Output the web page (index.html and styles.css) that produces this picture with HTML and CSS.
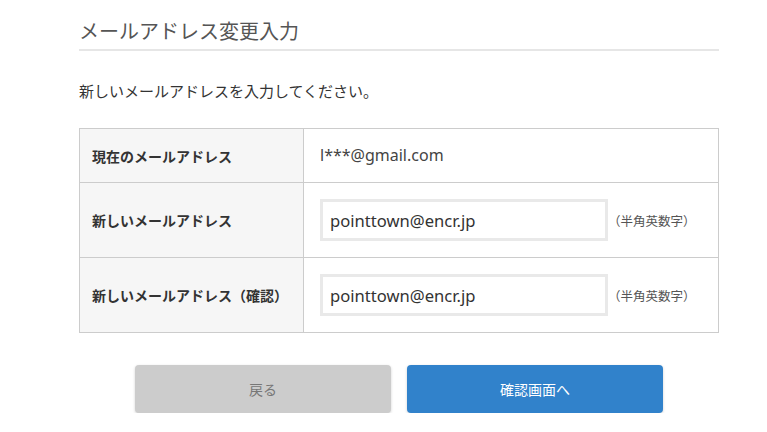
FILE: index.html
```html
<!DOCTYPE html>
<html lang="ja">
<head>
<meta charset="utf-8">
<link rel="stylesheet" href="styles.css">
</head>
<body>
<main class="page">
  <h1 class="title">メールアドレス変更入力</h1>
  <p class="lead">新しいメールアドレスを入力してください。</p>
  <div class="form-table">
    <div class="cell label">現在のメールアドレス</div>
    <div class="cell value current">l***@gmail.com</div>
    <div class="cell label">新しいメールアドレス</div>
    <div class="cell value">
      <input class="field" type="text" value="pointtown@encr.jp">
      <span class="note">（半角英数字）</span>
    </div>
    <div class="cell label">新しいメールアドレス（確認）</div>
    <div class="cell value">
      <input class="field" type="text" value="pointtown@encr.jp">
      <span class="note">（半角英数字）</span>
    </div>
  </div>
  <div class="actions">
    <button class="btn btn-back" type="button">戻る</button>
    <button class="btn btn-next" type="button">確認画面へ</button>
  </div>
</main>
</body>
</html>
```
FILE: styles.css
```css
* { box-sizing: border-box; }
html, body { margin: 0; padding: 0; background: #fff; }
body {
  font-family: "Noto Sans", "Noto Sans CJK JP", sans-serif;
  color: #333;
}
.page {
  width: 640px;
  margin-left: 79px;
}
.title {
  margin: 0;
  padding-top: 18px;
  padding-bottom: 3px;
  font-size: 20px;
  line-height: 28px;
  font-weight: normal;
  color: #555;
  border-bottom: 2px solid #e6e6e6;
}
.lead {
  margin: 30px 0 0;
  font-size: 15px;
  line-height: 20px;
  color: #333;
}
.form-table {
  margin-top: 27px;
  display: grid;
  grid-template-columns: 224px 415px;
  grid-template-rows: 54px 75px 75px;
  border-left: 1px solid #ccc;
  border-top: 1px solid #ccc;
}
.cell {
  border-right: 1px solid #ccc;
  border-bottom: 1px solid #ccc;
  display: flex;
  align-items: center;
}
.label {
  background: #f6f6f6;
  padding-left: 12px;
  font-size: 14px;
  font-weight: bold;
  color: #333;
}
.value { padding-left: 16px; }
.current { font-size: 16px; color: #444; padding-bottom: 2px; }
.field {
  width: 288px;
  height: 42px;
  margin: 0;
  border: 3px solid #e9e9e9;
  padding: 0 7px;
  font-family: "Noto Sans", "Noto Sans CJK JP", sans-serif;
  font-size: 16.6px;
  color: #333;
  background: #fff;
  outline: none;
}
.note {
  margin-left: 0;
  font-size: 12.5px;
  color: #555;
}
.actions {
  margin-top: 32px;
  display: flex;
  justify-content: center;
  gap: 16px;
}
.btn {
  width: 256px;
  height: 48px;
  border: none;
  border-radius: 4px;
  font-family: "Noto Sans", "Noto Sans CJK JP", sans-serif;
  font-size: 14px;
  box-shadow: 0 1px 3px rgba(0,0,0,0.18);
}
.btn-back { background: #cccccc; color: #777; }
.btn-next { background: #3182cb; color: #fff; }
```
